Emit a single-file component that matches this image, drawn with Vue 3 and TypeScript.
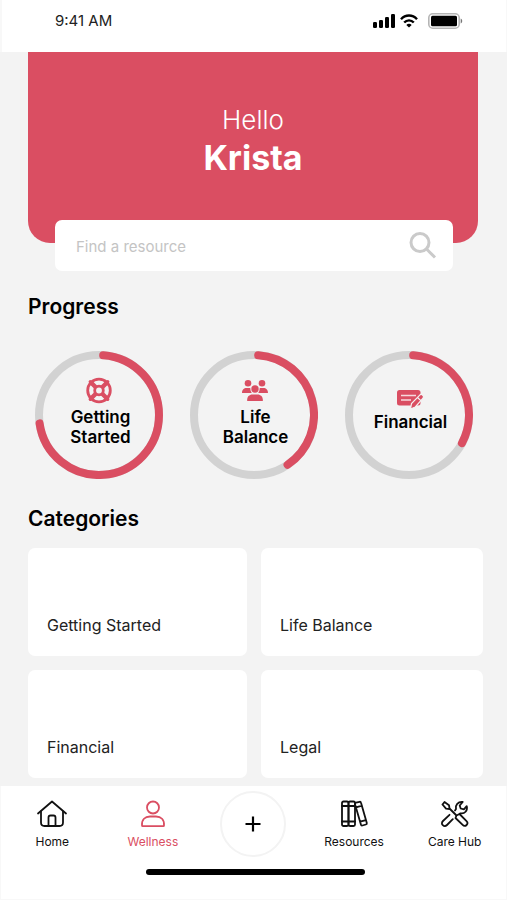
<script setup lang="ts">
import { ref } from 'vue'

interface Goal {
  id: string
  lines: string[]
  end: number
}

interface NavItem {
  id: string
  label: string
}

const START_ANGLE = 4
const RADIUS = 60

const query = ref('')
const active = ref('wellness')

const goals: Goal[] = [
  { id: 'started', lines: ['Getting', 'Started'], end: 262 },
  { id: 'life', lines: ['Life', 'Balance'], end: 146 },
  { id: 'financial', lines: ['Financial'], end: 118 },
]

const categories: string[] = ['Getting Started', 'Life Balance', 'Financial', 'Legal']

const navItems: NavItem[] = [
  { id: 'home', label: 'Home' },
  { id: 'wellness', label: 'Wellness' },
  { id: 'add', label: 'Add' },
  { id: 'resources', label: 'Resources' },
  { id: 'care', label: 'Care Hub' },
]

function point(angle: number): string {
  const rad = (angle * Math.PI) / 180
  return `${(64 + RADIUS * Math.sin(rad)).toFixed(2)} ${(64 - RADIUS * Math.cos(rad)).toFixed(2)}`
}

function arc(end: number): string {
  const large = end - START_ANGLE > 180 ? 1 : 0
  return `M${point(START_ANGLE)}A${RADIUS} ${RADIUS} 0 ${large} 1 ${point(end)}`
}
</script>

<template>
  <div class="page">
    <header class="status">
      <span class="time">9:41 AM</span>
      <div class="indicators">
        <svg width="22" height="14" viewBox="0 0 22 14" aria-hidden="true">
          <rect x="0" y="8" width="4" height="6" rx="1.2" />
          <rect x="6" y="6" width="4" height="8" rx="1.2" />
          <rect x="12" y="3" width="4" height="11" rx="1.2" />
          <rect x="18" y="0" width="4" height="14" rx="1.2" />
        </svg>
        <svg width="18" height="14" viewBox="0 0 18 14" fill="none" stroke="#000" stroke-width="2.4" aria-hidden="true">
          <path d="M1 5.2C5.5.3 12.5.3 17 5.2" />
          <path d="M4.2 8.5c2.7-2.9 6.9-2.9 9.6 0" />
          <path d="M9 13.5 6.3 10.9c1.6-1.4 3.8-1.4 5.4 0z" fill="#000" stroke="none" />
        </svg>
        <svg class="battery" width="35" height="16" viewBox="0 0 35 16" aria-hidden="true">
          <rect x="0.8" y="0.8" width="30.4" height="14.4" rx="4" fill="#fff" stroke="#b5b5b5" stroke-width="1.6" />
          <rect x="3" y="2.7" width="26" height="10.6" rx="1.5" />
          <path d="M32.7 5.5c2 .8 2 4.2 0 5z" fill="#777" />
        </svg>
      </div>
    </header>

    <main class="content">
      <section class="hero">
        <h1 class="greeting">
          <span class="hello">Hello</span>
          <span class="name">Krista</span>
        </h1>
      </section>

      <form class="search" role="search" @submit.prevent>
        <input v-model="query" class="search-input" type="text" placeholder="Find a resource" aria-label="Find a resource" />
        <button class="search-button" type="submit" aria-label="Search">
          <svg width="28" height="28" viewBox="0 0 28 28" fill="none" stroke="#cacaca" stroke-width="3" aria-hidden="true">
            <circle cx="11" cy="10.5" r="9" />
            <path d="m17.5 17 8.5 8.5" />
          </svg>
        </button>
      </form>

      <h2 class="heading">Progress</h2>
      <ul class="goals">
        <li v-for="goal in goals" :key="goal.id" class="goal">
          <svg class="ring" viewBox="0 0 128 128" fill="none" stroke-width="8" aria-hidden="true">
            <circle cx="64" cy="64" :r="RADIUS" stroke="#d2d2d2" />
            <path :d="arc(goal.end)" stroke="#da4e62" stroke-linecap="round" />
          </svg>
          <div class="goal-body" :class="{ single: goal.lines.length === 1 }">
            <svg v-if="goal.id === 'started'" class="goal-icon" width="28" height="28" viewBox="0 0 28 28" fill="none" stroke="#da4e62" aria-hidden="true">
              <circle cx="13" cy="13.5" r="11.3" stroke-width="2.8" />
              <circle cx="13" cy="13.5" r="4.3" stroke-width="2.8" />
              <path d="m5.5 6 4.5 4.500M20.500 6l-4.500 4.500M20.500 21l-4.500-4.500M5.500 21l4.500-4.500" stroke-width="4.4" />
              <path d="m4.300 4.800 1.500 1.500M21.700 4.800l-1.500 1.500M21.700 22.200l-1.500-1.500M4.300 22.200l1.500-1.500" stroke-width="3.400" stroke-linecap="round" />
            </svg>
            <svg v-else-if="goal.id === 'life'" class="goal-icon" width="28" height="28" viewBox="0 -3 28 28" fill="#da4e62" aria-hidden="true">
              <circle cx="7" cy="3.3" r="3.3" />
              <circle cx="21" cy="3.3" r="3.3" />
              <circle cx="14" cy="9" r="3.7" />
              <path d="M1 13C1 9.500 3 8 5.500 8H8c.6 0 1 .1 1.400.3-.1 1.800.4 3.300 1.400 4.200-.3.100-.5.300-.8.500H1zM27 13c0-3.500-2-5-4.500-5H20c-.6 0-1 .1-1.400.3.1 1.800-.4 3.300-1.400 4.200.3.100.5.300.8.500H27z" />
              <path d="M6.200 21c-.4-4 1.700-6.600 5.300-6.600h5c3.600 0 5.700 2.600 5.300 6.600z" />
            </svg>
            <svg v-else class="goal-icon" width="28" height="20" viewBox="0 0 28 20" aria-hidden="true">
              <rect x="1" y="1" width="23.5" height="15.5" rx="2.5" fill="#da4e62" />
              <path d="M5 6.500h15M5 11h10" stroke="#f7d9dd" stroke-width="1.5" />
              <path d="M14.500 20 15.500 14.500l8-8.200c1-1 2.200-1 3.200-.1s1.100 2.200.1 3.200l-7.500 8.600z" fill="#da4e62" stroke="#f3f3f3" stroke-width="1.2" />
              <path d="m21.500 8.500 3.600 3.400" stroke="#f3f3f3" stroke-width="1.2" />
            </svg>
            <span class="goal-label">
              <span v-for="line in goal.lines" :key="line" class="goal-line">{{ line }}</span>
            </span>
          </div>
        </li>
      </ul>

      <h2 class="heading categories-heading">Categories</h2>
      <div class="categories">
        <button v-for="category in categories" :key="category" type="button" class="category">{{ category }}</button>
      </div>
    </main>

    <footer class="dock">
      <nav class="nav">
        <template v-for="item in navItems" :key="item.id">
          <div v-if="item.id === 'add'" class="nav-slot">
            <button type="button" class="add" aria-label="Add">
              <svg width="16" height="16" viewBox="0 0 16 16" stroke="#000" stroke-width="2.2" aria-hidden="true">
                <path d="M8 .5v15M.5 8h15" />
              </svg>
            </button>
          </div>
          <a v-else :href="'#' + item.id" class="nav-item" :class="{ active: active === item.id }" @click.prevent="active = item.id">
            <svg width="32" height="28" viewBox="0 0 32 28" fill="none" stroke="currentColor" stroke-width="1.8" stroke-linecap="round" stroke-linejoin="round" aria-hidden="true">
              <g v-if="item.id === 'home'">
                <path d="M2 13.500 16 1.500l14 12" />
                <path d="M5 11.500V22.500c0 2.300 1.200 3.500 3.500 3.500h15c2.300 0 3.500-1.200 3.500-3.500V11.500" />
                <path d="M12.500 26V17.500c0-1.200.8-2 2-2h3c1.200 0 2 .8 2 2V26" />
              </g>
              <g v-else-if="item.id === 'wellness'">
                <circle cx="16" cy="7.500" r="6" />
                <path d="M5 25.500c-.5-6 3-9 8-9h6c5 0 8.500 3 8 9 0 .4-.3.700-.7.700H5.700c-.4 0-.7-.3-.7-.700z" />
              </g>
              <g v-else-if="item.id === 'resources'">
                <rect x="4" y="1.500" width="6.500" height="24.500" rx="1.500" />
                <rect x="10.500" y="1.500" width="6.500" height="24.500" rx="1.500" />
                <path d="M4 6h13M4 21.500h13" />
                <path d="m18 2.700 3.500-.9c.8-.2 1.300.1 1.500.9L28.800 23c.2.800-.1 1.300-.9 1.500l-3.500 1c-.8.200-1.300-.1-1.500-.9L17 4.200c-.1-.8.200-1.300 1-1.500zM18 7.300l6-1.600M22 21.700l6-1.600" />
              </g>
              <g v-else>
                <path d="m3.500 4.500 2-2.500 4.500 3.200.5 3.300 6.500 6.500M3.500 4.500 7 8.700l3.500.3" />
                <path d="m17.500 15.500 3-1.500 6.800 6.800c1.500 1.500 1.500 3 .3 4.200s-2.700 1.200-4.200-.3L16.500 18z" />
                <path d="m13.800 19.200-5.800 5.800c-1.300 1.300-3 1.300-4.200.2s-1.200-2.900.2-4.200l6.500-6.200" />
                <path d="m16 10.500 1-1.500c-1-4 2-7.500 6.700-7l-3 3.500 1 3 3.200.8 2.800-3.200c1.300 4.700-2.200 8-6.200 7.200l-.8.700" />
              </g>
            </svg>
            <span>{{ item.label }}</span>
          </a>
        </template>
      </nav>
      <div class="home-bar"></div>
    </footer>
  </div>
</template>

<style>
body {
  margin: 0;
  background: #f3f3f3;
}
</style>

<style scoped>
.page {
  display: flex;
  flex-direction: column;
  min-height: 100vh;
  box-sizing: border-box;
  background: #f3f3f3;
  color: #000;
  font-family: Inter, "Liberation Sans", sans-serif;
}

.status {
  display: flex;
  align-items: center;
  justify-content: space-between;
  height: 52px;
  box-sizing: border-box;
  padding: 0 43px 10px 53px;
  border: solid #f8f8f8;
  border-width: 0 1px 0 2px;
  background: #fff;
}

.time {
  font-size: 15px;
  line-height: 20px;
  color: #222;
}

.indicators {
  display: flex;
  align-items: center;
  gap: 5px;
}

.battery {
  margin-left: 5px;
}

.content {
  display: flex;
  flex-direction: column;
  padding: 0 24px 8px 28px;
}

.hero {
  height: 191px;
  box-sizing: border-box;
  margin-right: 5px;
  padding-top: 52px;
  border-radius: 0 0 22px 22px;
  background: #da4e62;
}

.greeting {
  display: flex;
  flex-direction: column;
  align-items: center;
  margin: 0;
  color: #fff;
}

.hello {
  font-size: 26px;
  font-weight: 300;
  line-height: 32px;
}

.name {
  font-size: 34px;
  font-weight: 700;
  line-height: 44px;
}

.search {
  display: flex;
  align-items: center;
  height: 51px;
  box-sizing: border-box;
  margin: -23px 30px 0 27px;
  padding: 0 16px 0 21px;
  border-radius: 7px;
  background: #fff;
}

.search-input {
  flex: 1;
  min-width: 0;
  padding: 2px 0 0;
  border: 0;
  outline: 0;
  background: none;
  color: #222;
  font-family: inherit;
  font-size: 15px;
  line-height: 24px;
}

.search-input::placeholder {
  color: #c4c4c4;
  opacity: 1;
}

.search-button {
  display: flex;
  padding: 0;
  border: 0;
  background: none;
  cursor: pointer;
}

.heading {
  margin: 22px 0 0;
  font-size: 21px;
  font-weight: 600;
  line-height: 28px;
}

.categories-heading {
  margin-top: 26px;
}

.goals {
  display: flex;
  justify-content: space-between;
  margin: 30px 10px 0 7px;
  padding: 0;
  list-style: none;
}

.goal {
  display: grid;
  width: 128px;
  height: 128px;
}

.ring,
.goal-body {
  grid-area: 1 / 1;
}

.goal-body {
  display: flex;
  flex-direction: column;
  align-items: center;
  padding: 26px 0 0 1px;
}

.goal-body.single {
  padding-top: 38px;
}

.goal-icon {
  display: block;
}

.goal-label {
  display: flex;
  flex-direction: column;
  margin-top: auto;
  padding: 0 0 32px 2px;
  text-align: center;
  font-size: 17px;
  font-weight: 600;
  line-height: 20px;
}

.single .goal-label {
  padding-bottom: 47px;
}

.categories {
  display: grid;
  grid-template-columns: 219fr 222fr;
  gap: 14px;
  margin-top: 15px;
}

.category {
  display: flex;
  align-items: flex-end;
  height: 108px;
  padding: 0 19px 19px;
  border: 0;
  border-radius: 7px;
  background: #fff;
  color: #222;
  font-family: inherit;
  font-size: 16px;
  line-height: 24px;
  cursor: pointer;
}

.dock {
  display: flex;
  flex-direction: column;
  align-items: center;
  flex: 1;
  box-sizing: border-box;
  border: solid #f8f8f8;
  border-width: 0 1px 1px;
  background: #fff;
}

.nav {
  display: grid;
  grid-template-columns: repeat(5, 1fr);
  align-items: start;
  width: 100%;
  box-sizing: border-box;
  padding: 5px 1px 0;
}

.nav-slot {
  display: flex;
  justify-content: center;
}

.nav-item {
  display: flex;
  flex-direction: column;
  align-items: center;
  gap: 6px;
  padding-top: 9px;
  color: #111;
  font-size: 12px;
  line-height: 16px;
  text-decoration: none;
}

.nav-item.active {
  color: #da4e62;
}

.add {
  display: flex;
  align-items: center;
  justify-content: center;
  width: 66px;
  height: 66px;
  padding: 0;
  border: 2px solid #f3f3f3;
  border-radius: 50%;
  background: #fff;
  cursor: pointer;
}

.home-bar {
  width: 219px;
  height: 6px;
  margin: 12px 0 24px 4px;
  border-radius: 3px;
  background: #000;
}
</style>
